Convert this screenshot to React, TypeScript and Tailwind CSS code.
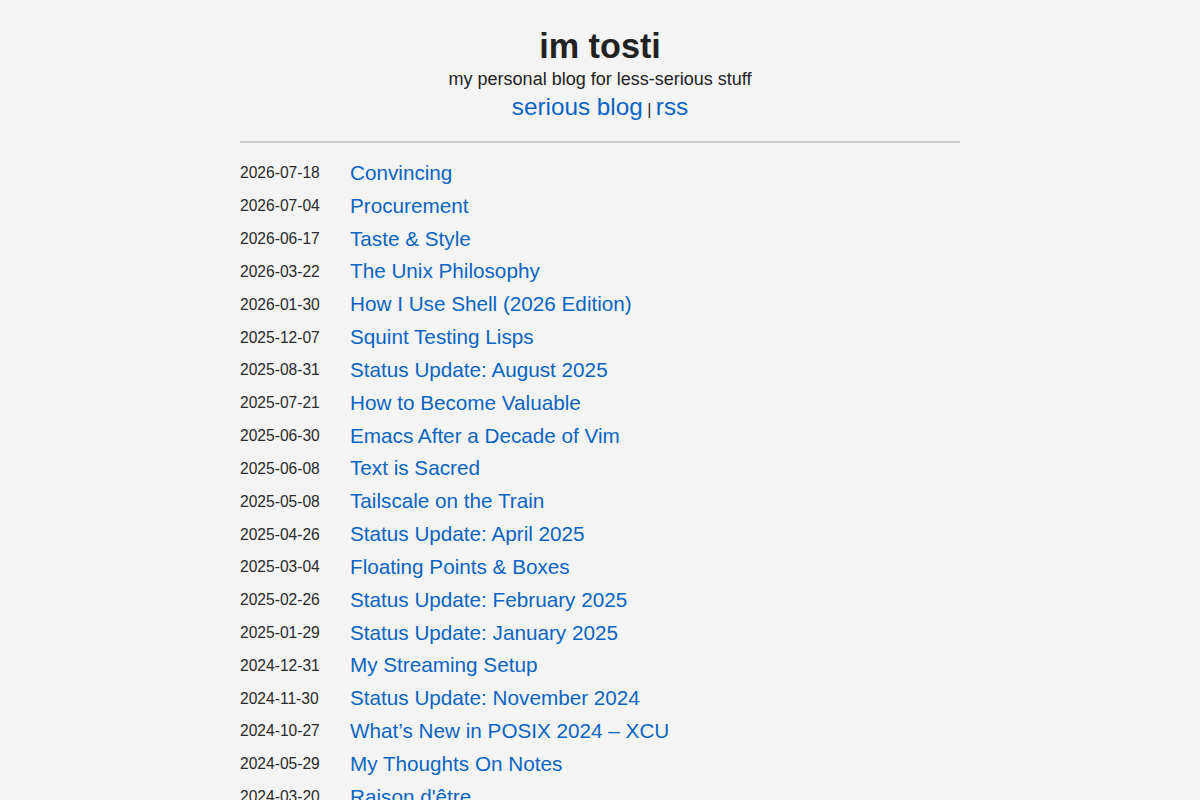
const posts: [string, string][] = [
  ["2026-07-18", "Convincing"],
  ["2026-07-04", "Procurement"],
  ["2026-06-17", "Taste & Style"],
  ["2026-03-22", "The Unix Philosophy"],
  ["2026-01-30", "How I Use Shell (2026 Edition)"],
  ["2025-12-07", "Squint Testing Lisps"],
  ["2025-08-31", "Status Update: August 2025"],
  ["2025-07-21", "How to Become Valuable"],
  ["2025-06-30", "Emacs After a Decade of Vim"],
  ["2025-06-08", "Text is Sacred"],
  ["2025-05-08", "Tailscale on the Train"],
  ["2025-04-26", "Status Update: April 2025"],
  ["2025-03-04", "Floating Points & Boxes"],
  ["2025-02-26", "Status Update: February 2025"],
  ["2025-01-29", "Status Update: January 2025"],
  ["2024-12-31", "My Streaming Setup"],
  ["2024-11-30", "Status Update: November 2024"],
  ["2024-10-27", "What\u2019s New in POSIX 2024 \u2013 XCU"],
  ["2024-05-29", "My Thoughts On Notes"],
  ["2024-03-20", "Raison d'\u00eatre"],
  ["2024-01-15", "Status Update: January 2024"],
];

export default function App() {
  return (
    <div
      className="min-h-screen bg-[#f4f4f4] text-[#222]"
      style={{ fontFamily: '"Liberation Sans", Arial, sans-serif' }}
    >
      <div className="mx-auto w-[720px] pt-[26px]">
        <header className="text-center">
          <h1 className="text-[34.2px] font-bold leading-[40px]">im tosti</h1>
          <p className="text-[18px] leading-[24px] mt-[1px]">my personal blog for less-serious stuff</p>
          <nav className="text-[24.3px] leading-[32px]">
            <a className="text-[#0a64c4]" href="#">serious blog</a>
            <span className="text-[16px] text-[#222]"> | </span>
            <a className="text-[#0a64c4]" href="#">rss</a>
          </nav>
        </header>
        <hr className="mt-[15px] border-0 h-[2px] bg-[#cccccc]" />
        <ul className="mt-[14px]">
          {posts.map(([date, title]) => (
            <li key={date} className="flex items-center h-[32.83px]">
              <span className="w-[110px] shrink-0 text-[15.6px] leading-[20px] text-[#2a2a2a]">{date}</span>
              <a className="text-[20.7px] leading-[32.83px] text-[#0a64c4]" href="#">{title}</a>
            </li>
          ))}
        </ul>
      </div>
    </div>
  );
}
